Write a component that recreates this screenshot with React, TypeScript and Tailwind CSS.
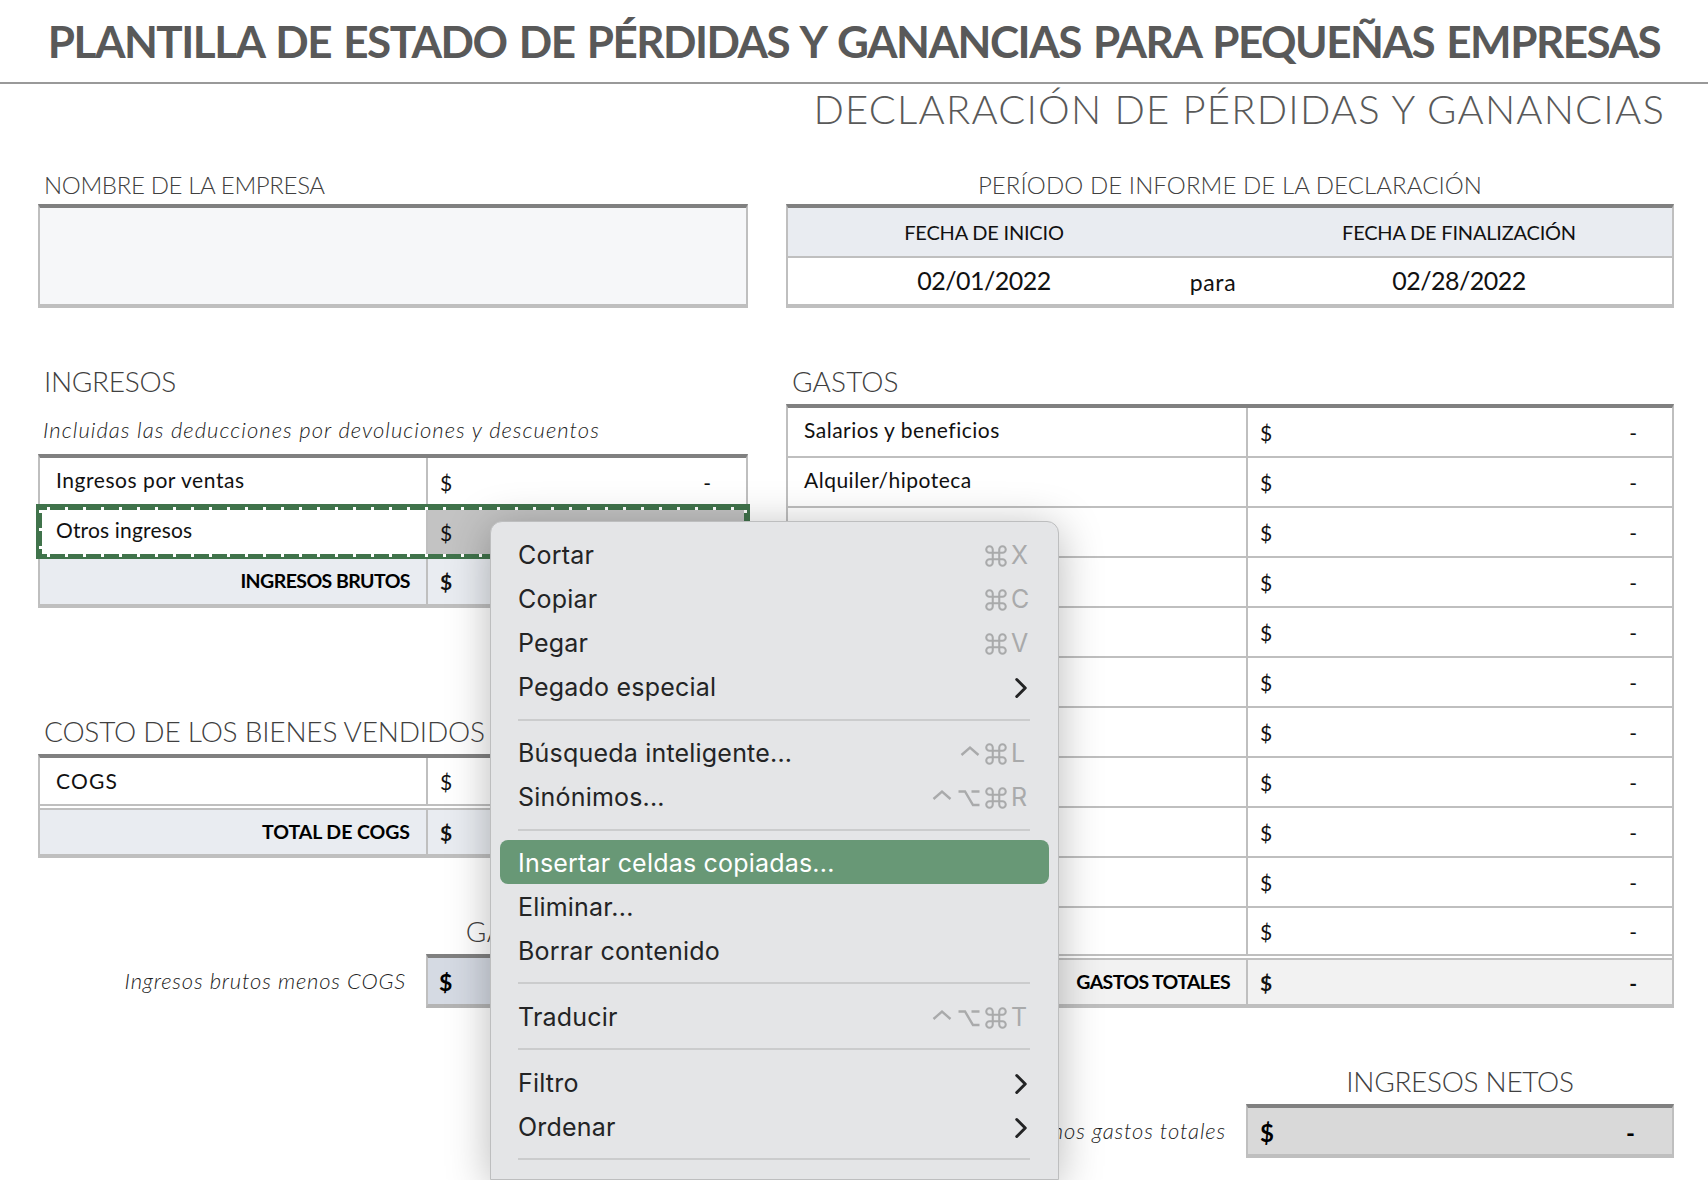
import React from "react";
import { Command, ChevronRight } from "lucide-react";

function Ctrl() {
  return (
    <svg width="20" height="20" viewBox="0 0 20 20" fill="none" stroke="#a9aaab" strokeWidth="2.4" className="shrink-0">
      <path d="M1.5 11 L10 3.5 L18.5 11" />
    </svg>
  );
}
function Opt() {
  return (
    <svg width="22" height="20" viewBox="0 0 22 20" fill="none" stroke="#a9aaab" strokeWidth="2.4" className="shrink-0">
      <path d="M0.5 3.5 H7 L15 17 H21.5 M13.5 3.5 H21.5" />
    </svg>
  );
}
function Cmd() {
  return <Command size={26} strokeWidth={1.9} color="#a9aaab" className="m-[-3px] shrink-0" />;
}

function Shortcut({ ctrl, opt, k }: { ctrl?: boolean; opt?: boolean; k: string }) {
  return (
    <div className="flex items-center text-[#a9aaab]">
      {ctrl && <span className="mr-[6px] flex"><Ctrl /></span>}
      {opt && <span className="mr-[6px] flex"><Opt /></span>}
      <Cmd />
      <span className="ml-[5px] w-[19px] text-[25px]">{k}</span>
    </div>
  );
}

function Item({ label, right, active, late }: { label: string; right?: React.ReactNode; active?: boolean; late?: boolean }) {
  return (
    <div className={`mx-[9px] flex h-[44px] items-center justify-between rounded-[8px] pl-[18px] pr-[19px] text-[25px] tracking-[0.2px] ${late || active ? "pt-[4px]" : "pt-[2px]"} ${active ? "bg-[#689876] text-white" : "text-[#232425]"}`}>
      <span>{label}</span>
      {right}
    </div>
  );
}
function Sep({ h = "h-[22px]" }: { h?: string }) {
  return (
    <div className={`flex items-center pl-[27px] pr-[28px] ${h}`}>
      <div className="h-[2px] w-full bg-[#cbcccd]" />
    </div>
  );
}
const Chev = () => <ChevronRight size={34} strokeWidth={2.1} color="#232425" className="mr-[-8px]" />;

function ContextMenu() {
  return (
    <div className="absolute bottom-0 left-[490px] top-[521px] w-[569px] overflow-hidden rounded-t-[12px] border border-[#bdbebf] bg-[#e4e5e7] pt-[11px] font-['Inter',sans-serif] shadow-[0_6px_44px_rgba(0,0,0,0.28)]">
      <Item label="Cortar" right={<Shortcut k="X" />} />
      <Item label="Copiar" right={<Shortcut k="C" />} />
      <Item label="Pegar" right={<Shortcut k="V" />} />
      <Item label="Pegado especial" right={<Chev />} />
      <Sep />
      <Item label="Búsqueda inteligente..." right={<Shortcut ctrl k="L" />} />
      <Item label="Sinónimos..." right={<Shortcut ctrl opt k="R" />} />
      <Sep h="h-[21px]" />
      <Item label="Insertar celdas copiadas..." active />
      <Item label="Eliminar..." late />
      <Item label="Borrar contenido" late />
      <Sep />
      <Item label="Traducir" right={<Shortcut ctrl opt k="T" />} late />
      <Sep />
      <Item label="Filtro" right={<Chev />} late />
      <Item label="Ordenar" right={<Chev />} late />
      <Sep />
    </div>
  );
}

function Heading({ h, children, className = "" }: { h: string; children: React.ReactNode; className?: string }) {
  return <div className={`flex items-end font-light leading-[36px] text-[#404040] ${h} ${className}`}>{children}</div>;
}

function Row({
  label, left, bold, last, rowH, fill = "", cellFill = "", double, labelCls = "",
}: {
  label?: string; left: string; bold?: boolean; last?: boolean; rowH: string; fill?: string; cellFill?: string; double?: boolean; labelCls?: string;
}) {
  return (
    <div className={`flex ${rowH} ${fill} ${last ? "" : "border-b-2 border-[#bfbfbf]"} ${double ? "mt-[2px] border-t-2 border-t-[#bfbfbf]" : ""}`}>
      <div className={`${left} flex items-center border-r-2 border-[#bfbfbf] ${bold ? "justify-end pr-[16px] text-[19.5px] font-bold text-black" : "pl-[16px] text-[21px] text-[#111]"} ${labelCls}`}>
        {label}
      </div>
      <div className={`flex flex-1 items-center justify-between pl-[12px] pr-[35px] pt-[1px] text-[21px] text-[#111] ${cellFill} ${bold ? "font-bold" : ""}`}>
        <span>$</span>
        <span>-</span>
      </div>
    </div>
  );
}

function Table({ children, className = "" }: { children: React.ReactNode; className?: string }) {
  return (
    <div className={`relative border-x-2 border-b-4 border-t-4 border-x-[#bfbfbf] border-b-[#bfbfbf] border-t-[#808080] ${className}`}>
      {children}
    </div>
  );
}

function Selection() {
  return (
    <div className="absolute left-[-4px] top-[46px] h-[55px] w-[714px] border-x-[6px] border-b-[5px] border-t-[6px] border-[#40734b]">
      <div className="absolute left-[-2px] right-[-2px] top-[-3px] h-[3px] bg-[repeating-linear-gradient(90deg,transparent_0_7px,#fff_7px_10px,transparent_10px_18px)]" />
      <div className="absolute bottom-[-3px] left-[-2px] right-[-2px] h-[3px] bg-[repeating-linear-gradient(90deg,transparent_0_7px,#fff_7px_10px,transparent_10px_18px)]" />
      <div className="absolute bottom-0 left-[-3px] top-0 w-[3px] bg-[repeating-linear-gradient(180deg,#fff_0_3px,transparent_3px_18px)]" />
      <div className="absolute bottom-0 right-[-3px] top-0 w-[3px] bg-[repeating-linear-gradient(180deg,#fff_0_3px,transparent_3px_18px)]" />
    </div>
  );
}

const expenses = ["Salarios y beneficios", "Alquiler/hipoteca", "", "", "", "", "", "", "", ""];

export default function App() {
  return (
    <div className="relative h-[1180px] w-[1708px] overflow-hidden bg-white font-['Lato',sans-serif]">
      <header className="flex h-[84px] items-start justify-center border-b-2 border-[#999] pt-[14px]">
        <h1 className="whitespace-nowrap text-[44px] font-bold leading-[54px] tracking-[-1.5px] text-[#595959] [word-spacing:3px]">
          PLANTILLA DE ESTADO DE PÉRDIDAS Y GANANCIAS PARA PEQUEÑAS EMPRESAS
        </h1>
      </header>

      <div className="flex h-[50px] items-center justify-end pr-[43px] text-[40px] font-light tracking-[1.2px] text-[#595959]">
        DECLARACIÓN DE PÉRDIDAS Y GANANCIAS
      </div>

      <main className="flex gap-[38px] pl-[38px]">
        <section className="flex w-[710px] flex-col">
          <Heading h="h-[70px] pb-[1px]" className="pl-[6px] text-[24px] tracking-[-0.35px]">NOMBRE DE LA EMPRESA</Heading>
          <div className="h-[104px] border-x-2 border-b-4 border-t-4 border-x-[#bfbfbf] border-b-[#bfbfbf] border-t-[#808080] bg-[#f6f7f9]" />

          <Heading h="h-[96px] pb-[5px]" className="pl-[6px] text-[28px] tracking-[-0.3px]">INGRESOS</Heading>
          <div className="flex h-[50px] items-center pl-[5px] pt-[1px] text-[22px] font-light italic tracking-[1.03px] text-[#222]">
            Incluidas las deducciones por devoluciones y descuentos
          </div>
          <Table>
            <Row label="Ingresos por ventas" left="w-[388px]" rowH="h-[50px]" labelCls="pb-[4px] tracking-[0.55px]" />
            <Row label="Otros ingresos" left="w-[388px]" rowH="h-[50px]" cellFill="bg-[#c3c3c3]" labelCls="pb-[4px] tracking-[0.16px]" />
            <Row label="INGRESOS BRUTOS" left="w-[388px]" rowH="h-[46px]" bold last fill="bg-[#e9ecf1]" labelCls="tracking-[-0.56px]" />
            <Selection />
          </Table>

          <Heading h="h-[146px] pb-[5px]" className="pl-[6px] text-[28px] tracking-[-0.2px]">COSTO DE LOS BIENES VENDIDOS</Heading>
          <Table>
            <Row label="COGS" left="w-[388px]" rowH="h-[48px]" labelCls="tracking-[1.2px]" />
            <Row label="TOTAL DE COGS" left="w-[388px]" rowH="h-[46px]" bold last double fill="bg-[#e9ecf1]" labelCls="tracking-[-0.05px]" />
          </Table>

          <Heading h="h-[96px] pb-[5px]" className="justify-end pr-[37px] text-[28px] tracking-[0.5px]">GANANCIA BRUTA</Heading>
          <div className="flex items-center justify-end">
            <span className="pb-[2px] pr-[20px] text-[22px] font-light italic tracking-[0.8px] text-[#222]">Ingresos brutos menos COGS</span>
            <div className="flex h-[54px] w-[322px] items-center justify-between border-x-2 border-b-4 border-t-4 border-x-[#bfbfbf] border-b-[#b4b4b4] border-t-[#808080] bg-[#d5dae3] pl-[11px] pr-[36px] pt-[3px] text-[23px] font-bold text-black">
              <span>$</span>
              <span>-</span>
            </div>
          </div>
        </section>

        <section className="flex w-[888px] flex-col">
          <Heading h="h-[70px] pb-[1px]" className="justify-center text-[24px] tracking-[0.08px]">PERÍODO DE INFORME DE LA DECLARACIÓN</Heading>
          <Table>
            <div className="grid h-[50px] grid-cols-[392px_66px_1fr] items-center border-b-2 border-[#bfbfbf] bg-[#e9ecf1] text-center text-[20px] tracking-[-0.2px] text-[#111]">
              <span>FECHA DE INICIO</span>
              <span />
              <span>FECHA DE FINALIZACIÓN</span>
            </div>
            <div className="grid h-[46px] grid-cols-[392px_66px_1fr] items-center text-center text-[25px] tracking-[-0.5px] text-[#111]">
              <span>02/01/2022</span>
              <span className="pt-[3px] text-[23px] tracking-[0.6px]">para</span>
              <span>02/28/2022</span>
            </div>
          </Table>

          <Heading h="h-[96px] pb-[5px]" className="pl-[6px] text-[28px] tracking-[0.1px]">GASTOS</Heading>
          <Table>
            {expenses.map((label, i) => (
              <Row key={i} label={label} left="w-[460px]" rowH="h-[50px]" labelCls="pb-[4px] tracking-[0.5px]" />
            ))}
            <Row left="w-[460px]" rowH="h-[48px]" />
            <Row label="GASTOS TOTALES" left="w-[460px]" rowH="h-[46px]" bold last double fill="bg-[#f2f2f2]" labelCls="tracking-[-0.63px]" />
          </Table>

          <Heading h="h-[96px] pb-[5px]" className="justify-center pl-[460px] text-[28px] tracking-[-0.3px]">INGRESOS NETOS</Heading>
          <div className="flex justify-end">
            <div className="flex items-center">
              <span className="pb-[2px] pr-[20px] text-[22px] font-light italic tracking-[0.85px] text-[#222]">Ingresos brutos menos gastos totales</span>
              <div className="flex h-[54px] w-[428px] items-center justify-between border-x-2 border-b-4 border-t-4 border-x-[#bfbfbf] border-b-[#bfbfbf] border-t-[#808080] bg-[#d9d9d9] pl-[12px] pr-[37px] pt-[3px] text-[24px] font-bold text-black">
                <span>$</span>
                <span>-</span>
              </div>
            </div>
          </div>
        </section>
      </main>

      <ContextMenu />
    </div>
  );
}
